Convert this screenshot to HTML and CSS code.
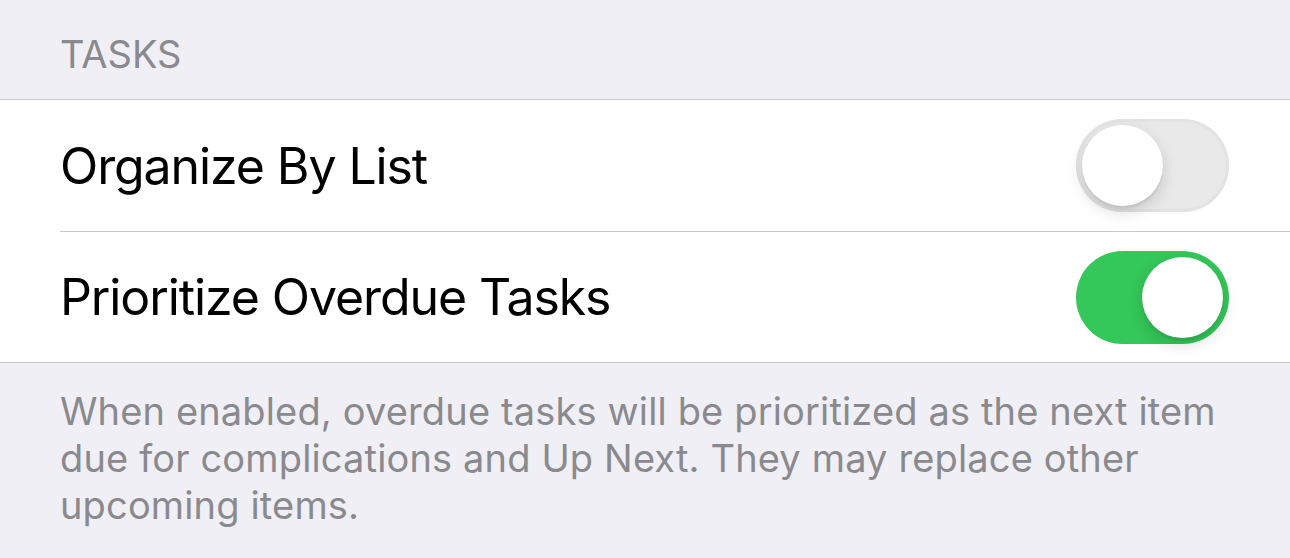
FILE: index.html
```html
<!DOCTYPE html>
<html lang="en">
<head>
    <meta charset="UTF-8">
    <title>Tasks Settings</title>
    <link rel="stylesheet" href="styles.css">
</head>
<body>
    <div class="settings">
        <div class="section-header">TASKS</div>
        <div class="group">
            <div class="row">
                <span class="label">Organize By List</span>
                <span class="switch"><span class="knob"></span></span>
            </div>
            <div class="row">
                <span class="label">Prioritize Overdue Tasks</span>
                <span class="switch on"><span class="knob"></span></span>
            </div>
        </div>
        <p class="section-footer">When enabled, overdue tasks will be prioritized as the next item due for complications and Up Next. They may replace other upcoming items.</p>
    </div>
</body>
</html>
```

FILE: styles.css
```css
/* Reset and font */
* {
    margin: 0;
    padding: 0;
    box-sizing: border-box;
    font-family: Inter, "Noto Sans", sans-serif;
}

body {
    background-color: #f0eff5;
    color: #000;
}

/* Section header */
.section-header {
    height: 100px;
    padding: 35px 0 0 60px;
    font-size: 38px;
    line-height: 38px;
    color: #8a8a8e;
    border-bottom: 1px solid #c8c7cc;
}

/* Group of rows */
.group {
    background-color: #fff;
    padding-left: 60px;
    border-bottom: 1px solid #c8c7cc;
}

.row {
    height: 131px;
    display: flex;
    align-items: center;
    justify-content: space-between;
    padding: 0 61px 0 0;
}

.row + .row {
    border-top: 1px solid #c8c7cc;
}

.label {
    font-size: 50px;
    letter-spacing: -1.1px;
}

/* Toggle switch */
.switch {
    position: relative;
    width: 153px;
    height: 93px;
    border-radius: 47px;
    background-color: #e9e9ea;
    box-shadow: inset 0 0 0 3px #e3e3e4;
}

.switch .knob {
    position: absolute;
    top: 6px;
    left: 6px;
    width: 81px;
    height: 81px;
    border-radius: 50%;
    background-color: #fff;
    box-shadow: 0 6px 16px rgba(0, 0, 0, 0.15), 0 3px 2px rgba(0, 0, 0, 0.06);
}

.switch.on {
    background-color: #34c759;
    box-shadow: none;
}

.switch.on .knob {
    left: 66px;
}

/* Footer text */
.section-footer {
    padding: 25px 60px 0 60px;
    font-size: 38px;
    line-height: 47px;
    letter-spacing: 0.15px;
    color: #8a8a8e;
}
```
